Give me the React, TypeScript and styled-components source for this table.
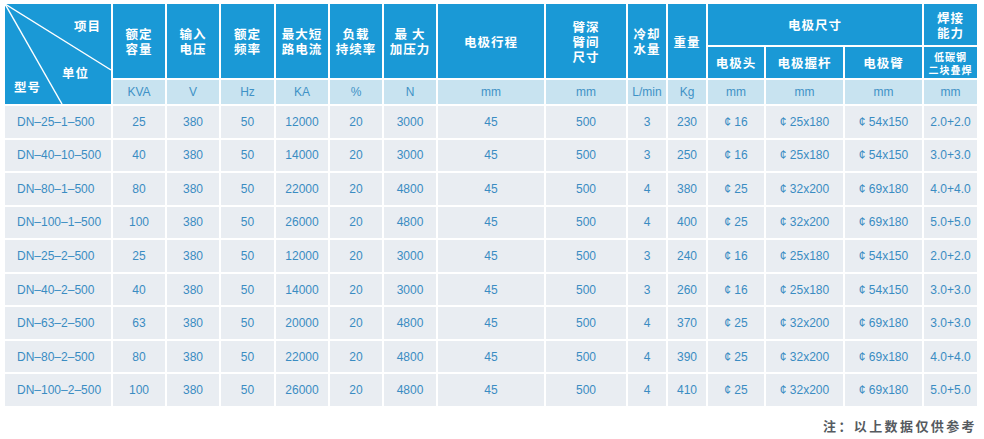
import React from "react";
import styled, { createGlobalStyle } from "styled-components";

const Global = createGlobalStyle`
  html, body { margin: 0; padding: 0; background: #ffffff; }
  body { font-family: "Liberation Sans", Arial, "Noto Sans CJK SC", sans-serif; }
`;

const Page = styled.div`
  width: 984px;
  height: 439px;
  padding: 4px 0 0 5px;
  box-sizing: border-box;
  display: flex;
  flex-direction: column;
`;

const Table = styled.div`
  display: grid;
  width: 972px;
  grid-template-columns: 106px 52px 52px 53px 52px 52px 52px 106px 80px 38px 38px 56px 77px 77px 53px;
  grid-template-rows: 41px 31px 24px repeat(9, 31.55px);
  gap: 2px;
`;

const HeadCell = styled.div<{ $col: number; $row: number; $cspan?: number; $rspan?: number; $small?: boolean }>`
  grid-column: ${(p) => p.$col} / span ${(p) => p.$cspan ?? 1};
  grid-row: ${(p) => p.$row} / span ${(p) => p.$rspan ?? 1};
  background: #1a99d6;
  color: #ffffff;
  font-family: "Noto Sans CJK SC", sans-serif;
  font-weight: 700;
  font-size: ${(p) => (p.$small ? "10px" : "12.5px")};
  line-height: ${(p) => (p.$small ? "13px" : "15px")};
  letter-spacing: 1px;
  display: flex;
  align-items: center;
  justify-content: center;
  text-align: center;
  white-space: pre-line;
`;

const CornerCell = styled.div`
  grid-column: 1;
  grid-row: 1 / span 3;
  background: #1a99d6;
  position: relative;
  overflow: hidden;
  color: #ffffff;
  font-family: "Noto Sans CJK SC", sans-serif;
  font-weight: 700;
  font-size: 12.5px;
  letter-spacing: 1px;
`;

const CornerLines = styled.svg`
  position: absolute;
  left: 0;
  top: 0;
  width: 106px;
  height: 100px;
`;

const CornerLabel = styled.span<{ $x: number; $y: number }>`
  position: absolute;
  left: ${(p) => p.$x}px;
  top: ${(p) => p.$y}px;
  line-height: 15px;
  white-space: nowrap;
`;

const UnitCell = styled.div`
  grid-row: 3;
  background: #c8e3f0;
  color: #3f92c6;
  font-size: 12px;
  display: flex;
  align-items: center;
  justify-content: center;
`;

const DataCell = styled.div<{ $first?: boolean }>`
  background: #e9edf2;
  color: #3a8cc2;
  font-size: 12px;
  display: flex;
  align-items: center;
  justify-content: ${(p) => (p.$first ? "flex-start" : "center")};
  padding-left: ${(p) => (p.$first ? "12px" : "0")};
  white-space: nowrap;
`;

const Note = styled.div`
  width: 972px;
  margin-top: 12px;
  text-align: right;
  font-family: "Noto Sans CJK SC", sans-serif;
  font-weight: 700;
  font-size: 13px;
  letter-spacing: 2.4px;
  color: #555a60;
  line-height: 16px;
`;

type Head = { text: string; col: number; row: number; cspan?: number; rspan?: number; small?: boolean };

const heads: Head[] = [
  { text: "额定\n容量", col: 2, row: 1, rspan: 2 },
  { text: "输入\n电压", col: 3, row: 1, rspan: 2 },
  { text: "额定\n频率", col: 4, row: 1, rspan: 2 },
  { text: "最大短\n路电流", col: 5, row: 1, rspan: 2 },
  { text: "负载\n持续率", col: 6, row: 1, rspan: 2 },
  { text: "最 大\n加压力", col: 7, row: 1, rspan: 2 },
  { text: "电极行程", col: 8, row: 1, rspan: 2 },
  { text: "臂深\n臂间\n尺寸", col: 9, row: 1, rspan: 2 },
  { text: "冷却\n水量", col: 10, row: 1, rspan: 2 },
  { text: "重量", col: 11, row: 1, rspan: 2 },
  { text: "电极尺寸", col: 12, row: 1, cspan: 3 },
  { text: "焊接\n能力", col: 15, row: 1 },
  { text: "电极头", col: 12, row: 2 },
  { text: "电极握杆", col: 13, row: 2 },
  { text: "电极臂", col: 14, row: 2 },
  { text: "低碳钢\n二块叠焊", col: 15, row: 2, small: true },
];

const units = ["KVA", "V", "Hz", "KA", "%", "N", "mm", "mm", "L/min", "Kg", "mm", "mm", "mm", "mm"];

const rows: string[][] = [
  ["DN–25–1–500", "25", "380", "50", "12000", "20", "3000", "45", "500", "3", "230", "¢ 16", "¢ 25x180", "¢ 54x150", "2.0+2.0"],
  ["DN–40–10–500", "40", "380", "50", "14000", "20", "3000", "45", "500", "3", "250", "¢ 16", "¢ 25x180", "¢ 54x150", "3.0+3.0"],
  ["DN–80–1–500", "80", "380", "50", "22000", "20", "4800", "45", "500", "4", "380", "¢ 25", "¢ 32x200", "¢ 69x180", "4.0+4.0"],
  ["DN–100–1–500", "100", "380", "50", "26000", "20", "4800", "45", "500", "4", "400", "¢ 25", "¢ 32x200", "¢ 69x180", "5.0+5.0"],
  ["DN–25–2–500", "25", "380", "50", "12000", "20", "3000", "45", "500", "3", "240", "¢ 16", "¢ 25x180", "¢ 54x150", "2.0+2.0"],
  ["DN–40–2–500", "40", "380", "50", "14000", "20", "3000", "45", "500", "3", "260", "¢ 16", "¢ 25x180", "¢ 54x150", "3.0+3.0"],
  ["DN–63–2–500", "63", "380", "50", "20000", "20", "4800", "45", "500", "4", "370", "¢ 25", "¢ 32x200", "¢ 69x180", "3.0+3.0"],
  ["DN–80–2–500", "80", "380", "50", "22000", "20", "4800", "45", "500", "4", "390", "¢ 25", "¢ 32x200", "¢ 69x180", "4.0+4.0"],
  ["DN–100–2–500", "100", "380", "50", "26000", "20", "4800", "45", "500", "4", "410", "¢ 25", "¢ 32x200", "¢ 69x180", "5.0+5.0"],
];

export default function App() {
  return (
    <>
      <Global />
      <Page>
        <Table>
          <CornerCell>
            <CornerLines viewBox="0 0 106 100">
              <line x1="0" y1="0" x2="106" y2="66" stroke="#ffffff" strokeWidth="1.4" />
              <line x1="0" y1="0" x2="57" y2="100" stroke="#ffffff" strokeWidth="1.4" />
            </CornerLines>
            <CornerLabel $x={69} $y={14}>项目</CornerLabel>
            <CornerLabel $x={57} $y={61}>单位</CornerLabel>
            <CornerLabel $x={9} $y={75}>型号</CornerLabel>
          </CornerCell>
          {heads.map((h, i) => (
            <HeadCell key={i} $col={h.col} $row={h.row} $cspan={h.cspan} $rspan={h.rspan} $small={h.small}>
              {h.text}
            </HeadCell>
          ))}
          {units.map((u, i) => (
            <UnitCell key={i} style={{ gridColumn: i + 2 }}>
              {u}
            </UnitCell>
          ))}
          {rows.map((r, ri) =>
            r.map((v, ci) => (
              <DataCell key={`${ri}-${ci}`} $first={ci === 0}>
                {v}
              </DataCell>
            ))
          )}
        </Table>
        <Note>注：以上数据仅供参考</Note>
      </Page>
    </>
  );
}
